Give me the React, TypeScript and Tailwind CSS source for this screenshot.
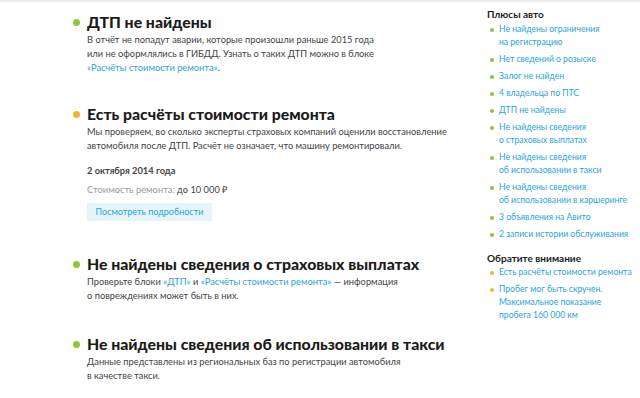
import React from 'react';

const body = "font-['Lato',sans-serif] text-[9.3px] leading-[14px] text-[#444]";
const link = 'text-[#2aa4d8]';

function Title({ dot, children }: { dot: string; children: React.ReactNode }) {
	return (
		<div className="flex items-center">
			<span className={`w-[7px] h-[7px] rounded-full ${dot} mr-[7px] ml-[-14px] shrink-0`} />
			<h2 className="font-['Lato',sans-serif] font-black text-[15.8px] leading-[22px] text-[#1c1c1c] whitespace-nowrap">
				{children}
			</h2>
		</div>
	);
}

function SideItem({ dot, children }: { dot: string; children: React.ReactNode }) {
	return (
		<li className="flex">
			<span className={`w-[4px] h-[4px] rounded-full ${dot} mt-[5px] mr-[5px] shrink-0`} />
			<span className={`${link} whitespace-nowrap`}>{children}</span>
		</li>
	);
}

export default function App() {
	const green = 'bg-[#8dc63f]';
	const yellow = 'bg-[#f2b632]';
	return (
		<div className="w-[640px] h-[398px] overflow-hidden bg-white border-t-2 border-[#ededed]">
			<div className="flex">
				{/* Main column */}
				<div className="w-[390px] ml-[87px] pt-[9px]">
					<section>
						<Title dot={green}>ДТП не найдены</Title>
						<p className={body}>
							В отчёт не попадут аварии, которые произошли раньше 2015 года
							<br />
							или не оформлялись в ГИБДД. Узнать о таких ДТП можно в блоке
							<br />
							<span className={link}>«Расчёты стоимости ремонта»</span>.
						</p>
					</section>

					<section className="mt-[28px]">
						<Title dot={yellow}>Есть расчёты стоимости ремонта</Title>
						<p className={`${body} whitespace-nowrap`}>
							Мы проверяем, во сколько эксперты страховых компаний оценили восстановление
							<br />
							автомобиля после ДТП. Расчёт не означает, что машину ремонтировали.
						</p>
						<p className={`${body} mt-[11px] font-bold text-[#1c1c1c]`}>2 октября 2014 года</p>
						<p className={`${body} mt-[5px]`}>
							<span className="text-[#9a9a9a]">Стоимость ремонта:</span> до 10 000 ₽
						</p>
						<button className="mt-[5px] h-[18px] w-[125px] bg-[#e6f5fc] text-[#2aa4d8] font-['Lato',sans-serif] text-[9px]">
							Посмотреть подробности
						</button>
					</section>

					<section className="mt-[32px]">
						<Title dot={green}>Не найдены сведения о страховых выплатах</Title>
						<p className={body}>
							Проверьте блоки <span className={link}>«ДТП»</span> и{' '}
							<span className={link}>«Расчёты стоимости ремонта»</span> — информация
							<br />о повреждениях может быть в них.
						</p>
					</section>

					<section className="mt-[30px]">
						<Title dot={green}>Не найдены сведения об использовании в такси</Title>
						<p className={body}>
							Данные представлены из региональных баз по регистрации автомобиля
							<br />в качестве такси.
						</p>
					</section>
				</div>

				{/* Sidebar */}
				<aside className="ml-auto w-[153px] pt-[6px] font-['Lato',sans-serif] text-[8.6px] leading-[13px]">
					<h3 className="font-bold text-[10px] leading-[13px] text-[#1c1c1c]">Плюсы авто</h3>
					<ul className="mt-[2px] ml-[3px] flex flex-col gap-[4px]">
						<SideItem dot={green}>Не найдены ограничения<br />на регистрацию</SideItem>
						<SideItem dot={green}>Нет сведений о розыске</SideItem>
						<SideItem dot={green}>Залог не найден</SideItem>
						<SideItem dot={green}>4 владельца по ПТС</SideItem>
						<SideItem dot={green}>ДТП не найдены</SideItem>
						<SideItem dot={green}>Не найдены сведения<br />о страховых выплатах</SideItem>
						<SideItem dot={green}>Не найдены сведения<br />об использовании в такси</SideItem>
						<SideItem dot={green}>Не найдены сведения<br />об использовании в каршеринге</SideItem>
						<SideItem dot={green}>3 объявления на Авито</SideItem>
						<SideItem dot={green}>2 записи истории обслуживания</SideItem>
					</ul>
					<h3 className="mt-[11px] font-bold text-[10px] leading-[13px] text-[#1c1c1c]">Обратите внимание</h3>
					<ul className="mt-[1px] ml-[3px] flex flex-col gap-[4px]">
						<SideItem dot={yellow}>Есть расчёты стоимости ремонта</SideItem>
						<SideItem dot={yellow}>Пробег мог быть скручен.<br />Максимальное показание<br />пробега 160 000 км</SideItem>
					</ul>
				</aside>
			</div>
		</div>
	);
}
